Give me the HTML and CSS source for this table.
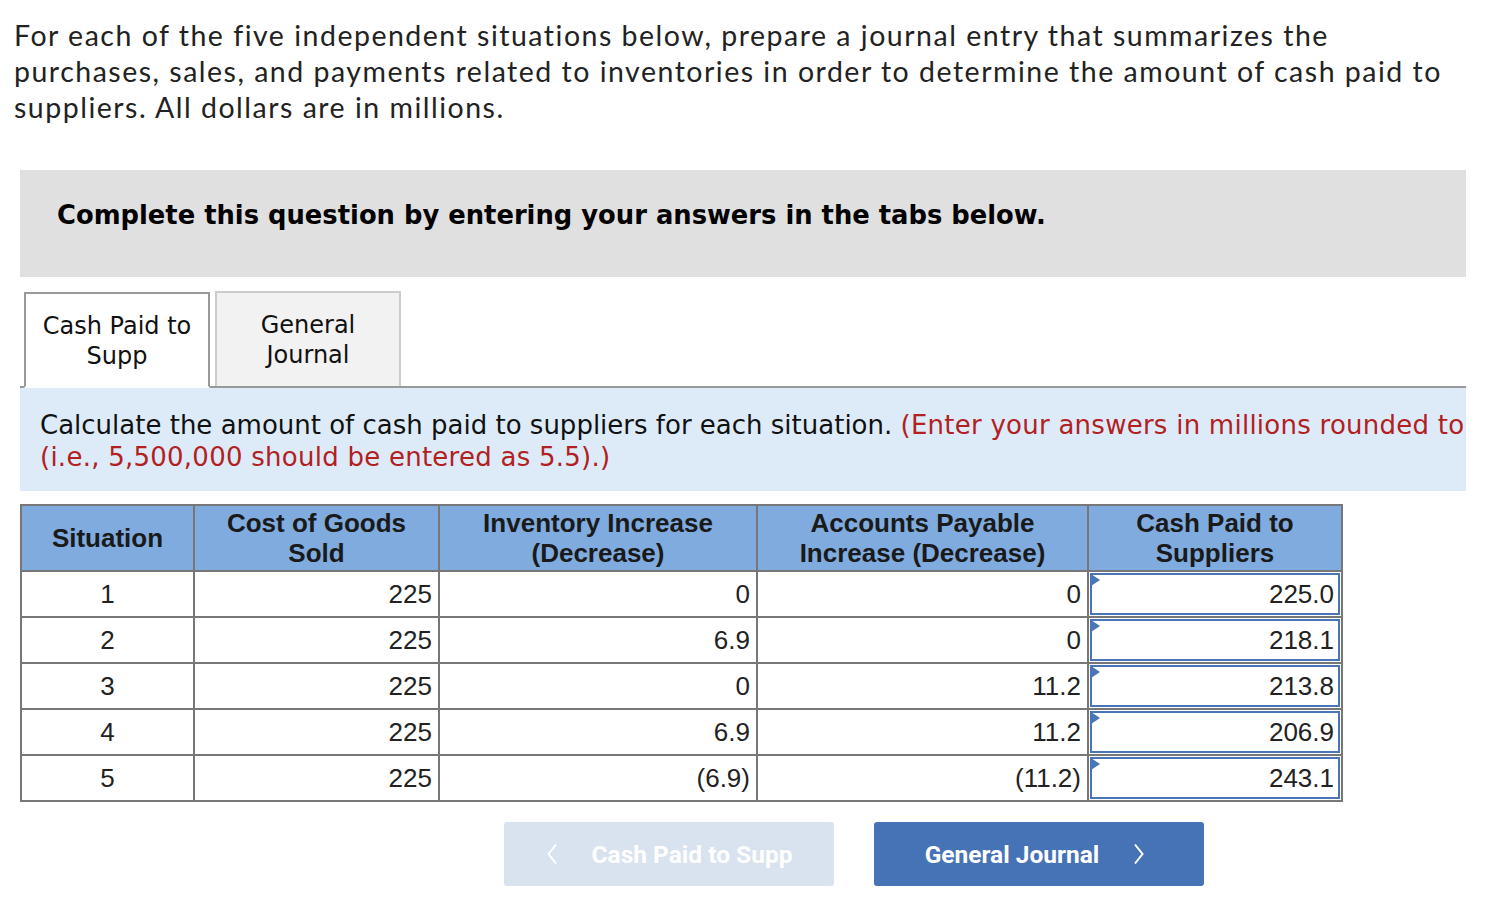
FILE: index.html
```html
<!DOCTYPE html>
<html>
<head>
<meta charset="utf-8">
<link rel="stylesheet" href="styles.css">
</head>
<body>
<div class="page">
  <p class="intro">For each of the five independent situations below, prepare a journal entry that summarizes the<br>purchases, sales, and payments related to inventories in order to determine the amount of cash paid to<br>suppliers. All dollars are in millions.</p>

  <div class="banner">Complete this question by entering your answers in the tabs below.</div>

  <div class="tabs">
    <div class="tab active">Cash Paid to<br>Supp</div>
    <div class="tab">General<br>Journal</div>
  </div>

  <div class="instruct">
    <div class="line">Calculate the amount of cash paid to suppliers for each situation. <span class="red">(Enter your answers in millions rounded to</span></div>
    <div class="line red">(i.e., 5,500,000 should be entered as 5.5).)</div>
  </div>

  <table class="grid">
    <colgroup>
      <col class="c1"><col class="c2"><col class="c3"><col class="c4"><col class="c5">
    </colgroup>
    <thead>
      <tr>
        <th>Situation</th>
        <th>Cost of Goods<br>Sold</th>
        <th>Inventory Increase<br>(Decrease)</th>
        <th>Accounts Payable<br>Increase (Decrease)</th>
        <th>Cash Paid to<br>Suppliers</th>
      </tr>
    </thead>
    <tbody>
      <tr><td class="ctr">1</td><td>225</td><td>0</td><td>0</td><td class="inp"><div class="box">225.0</div></td></tr>
      <tr><td class="ctr">2</td><td>225</td><td>6.9</td><td>0</td><td class="inp"><div class="box">218.1</div></td></tr>
      <tr><td class="ctr">3</td><td>225</td><td>0</td><td>11.2</td><td class="inp"><div class="box">213.8</div></td></tr>
      <tr><td class="ctr">4</td><td>225</td><td>6.9</td><td>11.2</td><td class="inp"><div class="box">206.9</div></td></tr>
      <tr><td class="ctr">5</td><td>225</td><td>(6.9)</td><td>(11.2)</td><td class="inp"><div class="box">243.1</div></td></tr>
    </tbody>
  </table>

  <div class="nav">
    <div class="btn prev">
      <svg class="chev" width="12" height="22" viewBox="0 0 12 22"><path d="M10 1.5 L2.5 11 L10 20.5" fill="none" stroke="#fff" stroke-width="2"/></svg>
      <span>Cash Paid to Supp</span>
    </div>
    <div class="btn next">
      <span>General Journal</span>
      <svg class="chev" width="12" height="22" viewBox="0 0 12 22"><path d="M2 1.5 L9.5 11 L2 20.5" fill="none" stroke="#fff" stroke-width="2"/></svg>
    </div>
  </div>
</div>
</body>
</html>
```

FILE: styles.css
```css
html, body {
  margin: 0;
  padding: 0;
  background: #fff;
}

.page {
  width: 1490px;
  padding: 17px 0 0 0;
}

.intro {
  margin: 0 0 45px 14px;
  font-family: "Lato", "Open Sans", sans-serif;
  font-size: 28.5px;
  letter-spacing: 1.5px;
  line-height: 36px;
  color: #222;
  white-space: nowrap;
}

.banner {
  margin-left: 20px;
  width: 1446px;
  height: 107px;
  box-sizing: border-box;
  padding: 30px 0 0 37px;
  background: #e0e0e0;
  font-family: "DejaVu Sans", Verdana, sans-serif;
  font-weight: bold;
  font-size: 25.8px;
  line-height: 30px;
  color: #000;
  white-space: nowrap;
}

.tabs {
  margin: 15px 0 0 20px;
  width: 1446px;
  display: flex;
  gap: 5px;
  padding-left: 4px;
  box-sizing: border-box;
  border-bottom: 2px solid #999;
  height: 96px;
  align-items: flex-end;
}

.tab {
  box-sizing: border-box;
  width: 186px;
  height: 95px;
  padding-top: 17px;
  text-align: center;
  font-family: "DejaVu Sans", Verdana, sans-serif;
  font-size: 24px;
  line-height: 30px;
  color: #111;
  background: #f2f2f2;
  border: 2px solid #ccc;
  border-bottom: none;
}

.tab.active {
  background: #fff;
  border-color: #999;
  height: 96px;
  margin-bottom: -2px;
  border-bottom: 2px solid #fff;
}

.instruct {
  margin-left: 20px;
  width: 1446px;
  height: 103px;
  box-sizing: border-box;
  padding: 21px 0 0 20px;
  background: #ddebf8;
  overflow: hidden;
  font-family: "DejaVu Sans", Verdana, sans-serif;
  font-size: 26px;
  line-height: 32px;
  color: #111;
}

.instruct .line {
  white-space: nowrap;
}

.red {
  color: #b2201f;
  letter-spacing: 0.25px;
}

.grid {
  margin: 13px 0 0 20px;
  border-collapse: collapse;
  table-layout: fixed;
  width: 1322px;
  font-family: "Liberation Sans", Arial, sans-serif;
  font-size: 26px;
  color: #222;
}

.c1 { width: 173px; }
.c2 { width: 245px; }
.c3 { width: 318px; }
.c4 { width: 331px; }
.c5 { width: 254px; }

.grid th, .grid td {
  border: 2px solid #777;
}

.grid th {
  background: #7fabdf;
  height: 64px;
  padding: 0;
  font-weight: bold;
  line-height: 30px;
  text-align: center;
  color: #1a1a1a;
}

.grid td {
  height: 44px;
  padding: 0 6px;
  text-align: right;
  line-height: 30px;
}

.grid td.ctr {
  text-align: center;
}

.grid td.inp {
  padding: 0;
}

.box {
  position: relative;
  margin: 1px;
  border: 2px solid #4a75b6;
  box-sizing: border-box;
  height: 42px;
  padding: 4px 4px 0 0;
  line-height: 30px;
  text-align: right;
  background: #fff;
}

.box::before {
  content: "";
  position: absolute;
  left: -1px;
  top: -1px;
  width: 0;
  height: 0;
  border-top: 6px solid transparent;
  border-bottom: 6px solid transparent;
  border-left: 9px solid #4a75b6;
}

.nav {
  display: flex;
  gap: 40px;
  margin: 20px 0 0 504px;
}

.btn {
  box-sizing: border-box;
  width: 330px;
  height: 64px;
  border-radius: 3px;
  display: flex;
  align-items: center;
  justify-content: center;
  gap: 34px;
  font-family: "Roboto", "Liberation Sans", sans-serif;
  font-weight: bold;
  font-size: 24.5px;
  color: #fff;
}

.btn.prev {
  background: #d9e3ef;
}

.btn.next {
  background: #4673b5;
  padding-right: 8px;
}

.chev {
  display: block;
}
```
